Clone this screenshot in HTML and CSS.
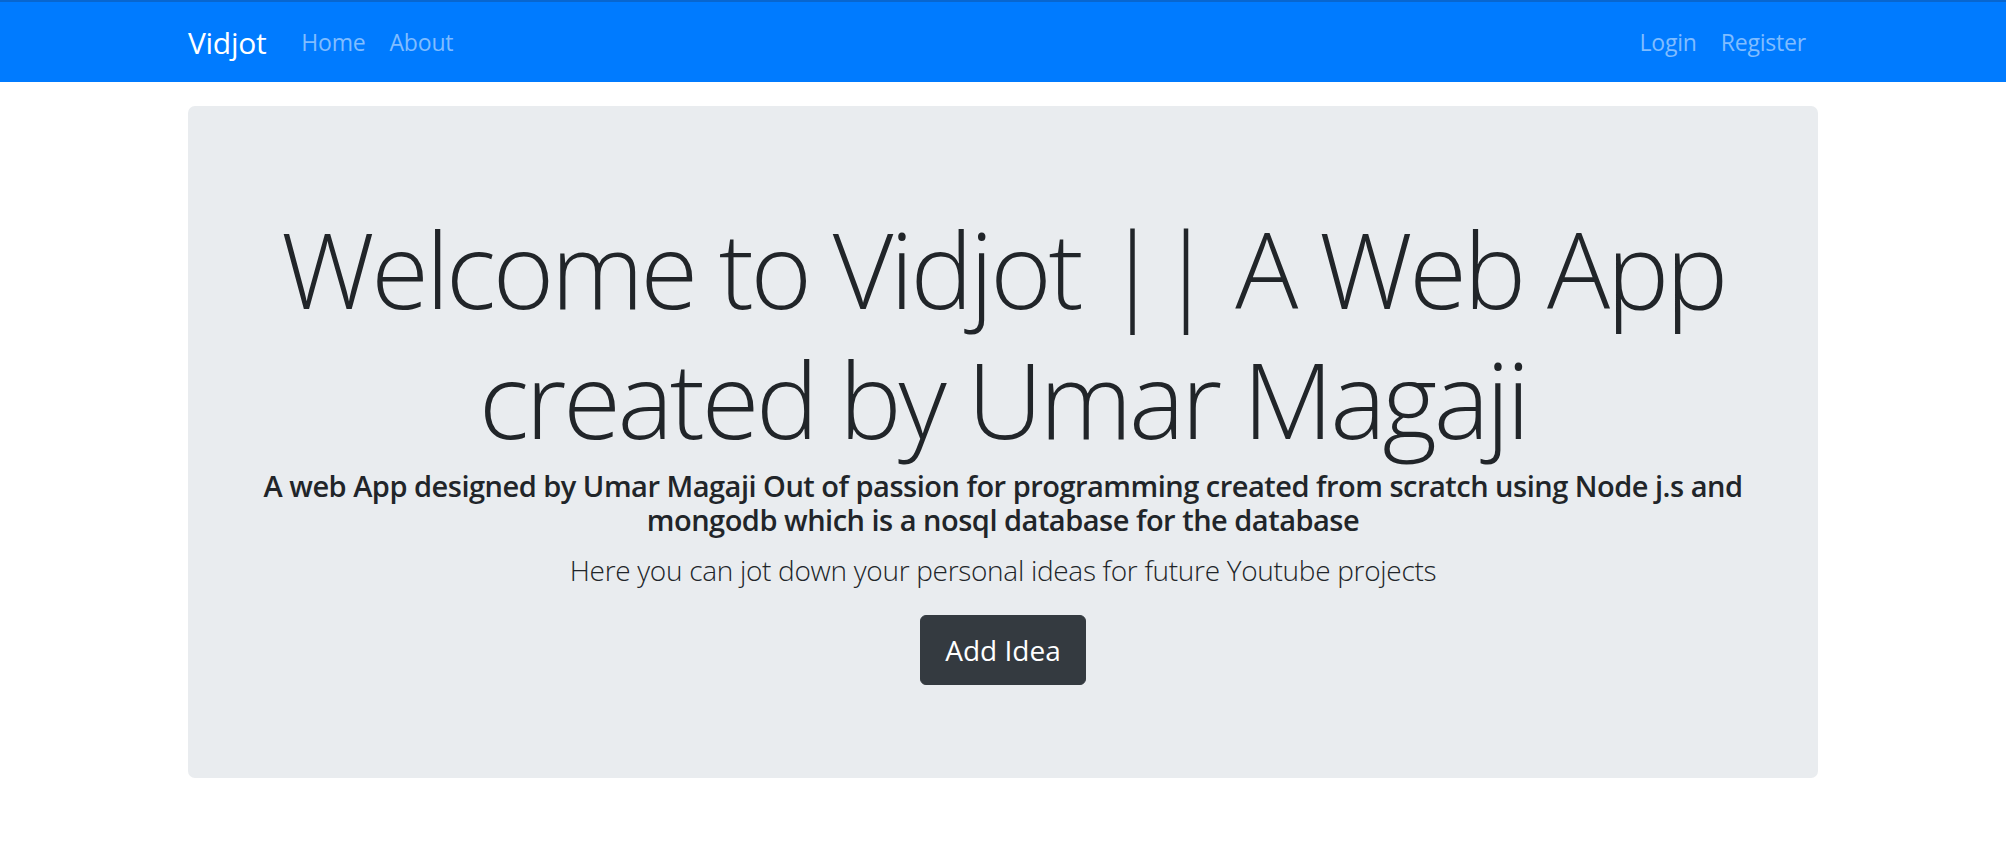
FILE: index.html
```html
<!DOCTYPE html>
<html lang="en">
<head>
<meta charset="utf-8">
<title>Vidjot</title>
<link rel="stylesheet" href="styles.css">
</head>
<body>
<nav class="navbar">
  <div class="container nav-inner">
    <a class="brand" href="#">Vidjot</a>
    <ul class="nav-links">
      <li><a href="#">Home</a></li>
      <li><a href="#">About</a></li>
    </ul>
    <ul class="nav-links nav-right">
      <li><a href="#">Login</a></li>
      <li><a href="#">Register</a></li>
    </ul>
  </div>
</nav>
<main class="container">
  <section class="jumbotron">
    <h1 class="display">Welcome to Vidjot || A Web App created by Umar Magaji</h1>
    <h5 class="subtitle">A web App designed by Umar Magaji Out of passion for programming created from scratch using Node j.s and mongodb which is a nosql database for the database</h5>
    <p class="lead">Here you can jot down your personal ideas for future Youtube projects</p>
    <a class="btn" href="#">Add Idea</a>
  </section>
</main>
</body>
</html>
```

FILE: styles.css
```css
* { box-sizing: border-box; }
html, body { margin: 0; padding: 0; }
body {
  font-family: "Open Sans", "Noto Sans", "Liberation Sans", sans-serif;
  color: #212529;
  background: #fff;
}
.container {
  width: 1630px;
  margin: 0 auto;
}
.navbar {
  background: #007bff;
  border-top: 2px solid #0866cf;
  height: 82px;
}
.nav-inner {
  display: flex;
  align-items: center;
  height: 100%;
}
.brand {
  color: #fff;
  text-decoration: none;
  font-size: 30px;
  margin-right: 23px;
  line-height: 1.5;
  letter-spacing: -0.3px;
}
.nav-links {
  display: flex;
  list-style: none;
  margin: 0;
  padding: 0;
}
.nav-links a {
  display: block;
  padding: 0 12px;
  color: #80bdff;
  text-decoration: none;
  font-size: 23px;
  letter-spacing: -0.2px;
}
.nav-right {
  margin-left: auto;
}
.jumbotron {
  margin-top: 24px;
  background: #e9ecef;
  border-radius: 7px;
  padding: 98px 40px 0;
  text-align: center;
  height: 672px;
}
.display {
  font-size: 105px;
  font-weight: 300;
  line-height: 130px;
  margin: 0 0 5px;
  letter-spacing: -3.3px;
}
.subtitle {
  font-size: 29px;
  font-weight: 600;
  line-height: 1.17;
  margin: 0 0 14px;
  letter-spacing: -0.5px;
}
.lead {
  font-size: 28px;
  font-weight: 300;
  margin: 0 0 26px;
  letter-spacing: -0.3px;
}
.btn {
  display: inline-block;
  background: #343a40;
  color: #fff;
  text-decoration: none;
  font-size: 28px;
  line-height: 1.5;
  padding: 13px 24px;
  border-radius: 6px;
  border: 1px solid #343a40;
}
```
